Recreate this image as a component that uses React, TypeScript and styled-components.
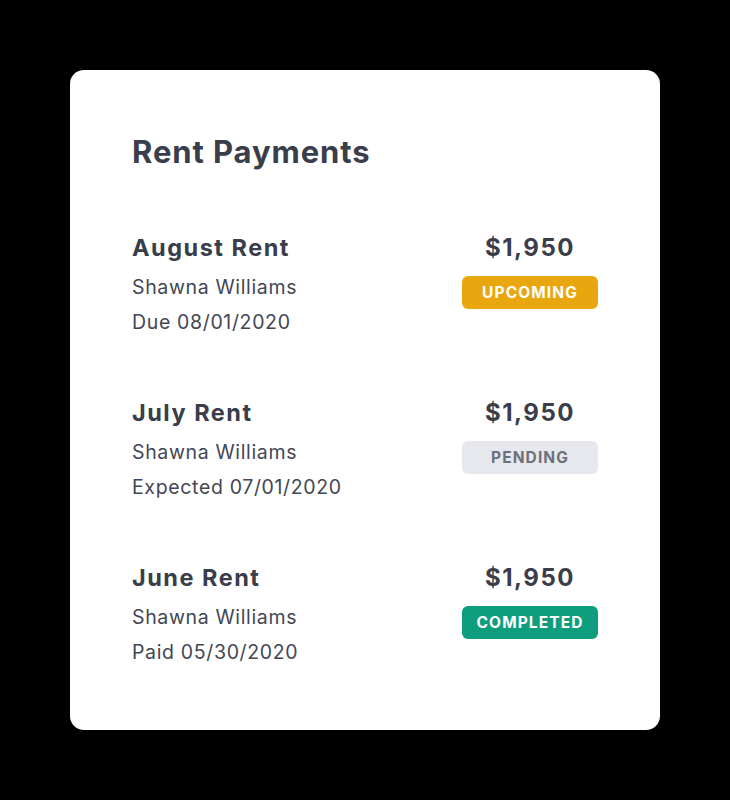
import React from "react";
import styled, { createGlobalStyle } from "styled-components";

const Global = createGlobalStyle`
  html, body { margin: 0; padding: 0; background: #000; }
  body { font-family: Inter, Lato, sans-serif; -webkit-font-smoothing: antialiased; }
`;

const Page = styled.div`
  width: 730px;
  height: 800px;
  background: #000;
  padding: 70px;
  box-sizing: border-box;
`;

const Card = styled.div`
  width: 590px;
  height: 660px;
  background: #fff;
  border-radius: 14px;
  padding: 60px 62px 0 62px;
  box-sizing: border-box;
  display: flex;
  flex-direction: column;
`;

const Title = styled.h1`
  margin: 0;
  font-size: 31px;
  font-weight: 700;
  color: #3a3d4a;
  line-height: 44px;
  letter-spacing: 0.9px;
`;

const List = styled.div`
  margin-top: 58px;
  display: flex;
  flex-direction: column;
  gap: 57px;
`;

const Row = styled.div`
  display: flex;
  justify-content: space-between;
  align-items: flex-start;
`;

const Left = styled.div`
  display: flex;
  flex-direction: column;
`;

const Name = styled.div`
  font-size: 23.5px;
  font-weight: 700;
  color: #3a3d4a;
  line-height: 32px;
  letter-spacing: 1.5px;
  margin-bottom: 6px;
`;

const Sub = styled.div`
  font-size: 19.5px;
  color: #434653;
  line-height: 35px;
  letter-spacing: 0.65px;
`;

const Right = styled.div`
  width: 136px;
  display: flex;
  flex-direction: column;
  align-items: center;
`;

const Amount = styled.div`
  font-size: 24px;
  font-weight: 700;
  color: #3a3d4a;
  line-height: 32px;
  letter-spacing: 1.5px;
  margin-bottom: 12px;
`;

type Variant = "upcoming" | "pending" | "completed";

const colors: Record<Variant, { bg: string; fg: string }> = {
  upcoming: { bg: "#e9a70f", fg: "#fff" },
  pending: { bg: "#e7e8ed", fg: "#6e707a" },
  completed: { bg: "#0f9e7d", fg: "#fff" },
};

const Badge = styled.div<{ $v: Variant }>`
  width: 136px;
  height: 33px;
  border-radius: 6px;
  background: ${(p) => colors[p.$v].bg};
  color: ${(p) => colors[p.$v].fg};
  font-size: 15.5px;
  font-weight: 700;
  letter-spacing: 1.1px;
  text-transform: uppercase;
  display: flex;
  align-items: center;
  justify-content: center;
`;

const rows: { name: string; sub: string; v: Variant; label: string }[] = [
  { name: "August Rent", sub: "Due 08/01/2020", v: "upcoming", label: "Upcoming" },
  { name: "July Rent", sub: "Expected 07/01/2020", v: "pending", label: "Pending" },
  { name: "June Rent", sub: "Paid 05/30/2020", v: "completed", label: "Completed" },
];

export default function App() {
  return (
    <>
      <Global />
      <Page>
        <Card>
          <Title>Rent Payments</Title>
          <List>
            {rows.map((r) => (
              <Row key={r.name}>
                <Left>
                  <Name>{r.name}</Name>
                  <Sub>Shawna Williams</Sub>
                  <Sub>{r.sub}</Sub>
                </Left>
                <Right>
                  <Amount>$1,950</Amount>
                  <Badge $v={r.v}>{r.label}</Badge>
                </Right>
              </Row>
            ))}
          </List>
        </Card>
      </Page>
    </>
  );
}
